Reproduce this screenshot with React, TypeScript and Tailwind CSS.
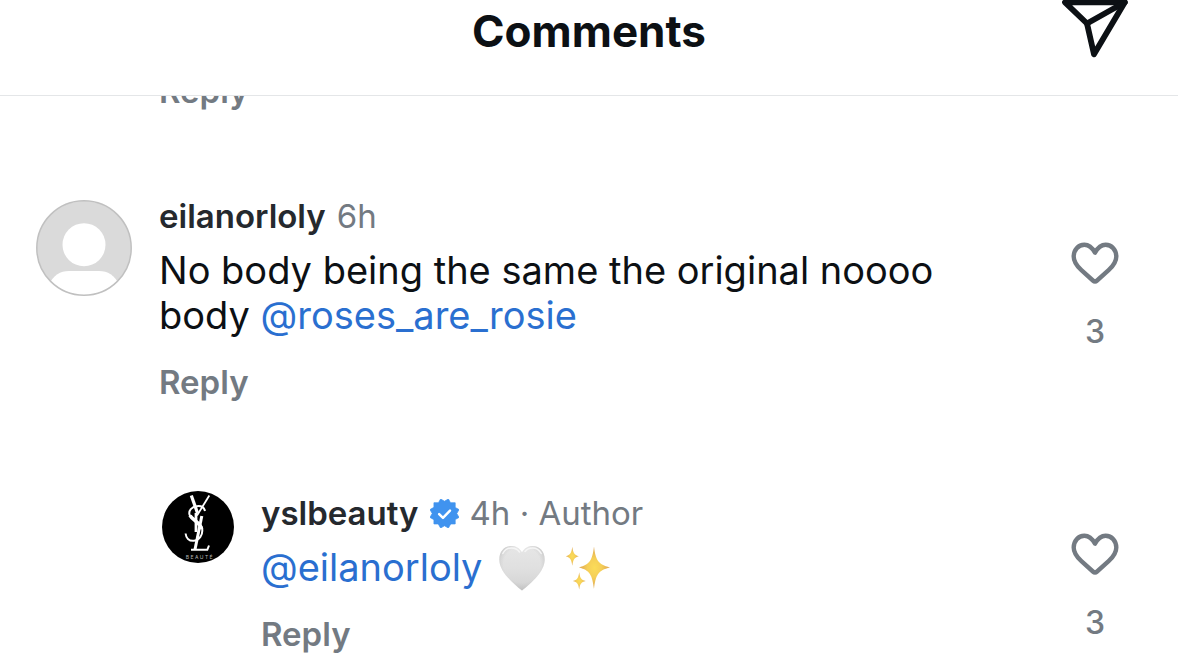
import type { ReactNode } from 'react';

function SendIcon() {
  return (
    <svg viewBox="0 0 68 60" className="block h-[60px] w-[68px]" fill="none" stroke="#0c1014" strokeWidth="5.8" strokeLinejoin="round" strokeLinecap="round" aria-hidden="true">
      <path d="M5 2.3H64.8L34 54.3L27 23.5Z" />
      <path d="M27 23.5L64.8 2.3" />
    </svg>
  );
}

function HeartIcon() {
  return (
    <svg viewBox="0 0 48 42" className="block h-[42px] w-12" fill="none" stroke="#737a82" strokeWidth="4.4" strokeLinejoin="round" aria-hidden="true">
      <path d="M24 10.6C21.2 5.6 17.8 2.7 13.4 2.7C7.2 2.7 2.7 8 2.7 14.6C2.7 20.4 6 24.3 10.4 28.2L21.9 38.5C23.3 39.7 24.7 39.7 26.1 38.5L37.6 28.2C42 24.3 45.3 20.4 45.3 14.6C45.3 8 40.8 2.7 34.6 2.7C30.2 2.7 26.8 5.6 24 10.6Z" />
    </svg>
  );
}

function VerifiedIcon() {
  return (
    <svg viewBox="0 0 40 40" className="block size-[29px] shrink-0" role="img" aria-label="Verified">
      <path
        fill="#4093ef"
        d="M19.998 3.094 14.638 0l-2.972 5.15H5.432v6.354L0 14.64 3.094 20 0 25.359l5.432 3.137v5.905h5.975L14.638 40l5.36-3.094L25.358 40l3.232-5.6h6.162v-6.01L40 25.359 36.905 20 40 14.641l-5.248-3.03v-6.46h-6.419L25.358 0l-5.36 3.094Z"
        stroke="#4093ef"
        strokeLinejoin="round"
      />
      <path d="M12.6 20.8L17.9 26L27.6 16" fill="none" stroke="#fff" strokeWidth="3.4" strokeLinecap="round" strokeLinejoin="round" />
    </svg>
  );
}

const HEART_SHAPE =
  'M24 8.2C21.5 3.9 17.8 2 13.3 2C6.2 2 1.3 7.6 1.3 15.4C1.3 27.5 14 38.2 24 46.5C34 38.2 46.7 27.5 46.7 15.4C46.7 7.6 41.8 2 34.7 2C30.2 2 26.5 3.9 24 8.2Z';

function WhiteHeart() {
  return (
    <svg viewBox="0 0 48 48" className="block size-12 shrink-0" role="img" aria-label="White heart">
      <defs>
        <linearGradient id="heartFill" x1="0" y1="0" x2="0" y2="1">
          <stop offset="0" stopColor="#e6e6e6" />
          <stop offset="0.5" stopColor="#e0e0e0" />
          <stop offset="1" stopColor="#d2d2d2" />
        </linearGradient>
        <radialGradient id="heartEdge" cx="0.5" cy="0.42" r="0.58">
          <stop offset="0.7" stopColor="#bdbdbd" stopOpacity="0" />
          <stop offset="1" stopColor="#b2b2b2" stopOpacity="0.6" />
        </radialGradient>
      </defs>
      <path d={HEART_SHAPE} fill="url(#heartFill)" />
      <path d={HEART_SHAPE} fill="url(#heartEdge)" />
      <path d="M4.8 9.5C7 5.6 9.8 4 13.5 4C17 4 19.5 5.3 21.5 8M27 7.5C29 5.2 31.5 4 34.5 4C38.2 4 41 5.6 43.2 9.5" fill="none" stroke="#f5f5f5" strokeWidth="1.5" strokeLinecap="round" />
    </svg>
  );
}

function Sparkles() {
  return (
    <svg viewBox="0 0 48 48" className="block size-12 shrink-0" role="img" aria-label="Sparkles">
      <defs>
        <radialGradient id="sparkle">
          <stop offset="0" stopColor="#fbdc58" />
          <stop offset="0.45" stopColor="#f5cf58" />
          <stop offset="1" stopColor="#dda452" />
        </radialGradient>
      </defs>
      <g fill="url(#sparkle)">
        <path d="M30 2.5C31.7 16 34 20.6 46 23.4C34 26.2 31.7 31 30 45C28.3 31 26 26.2 15 23.4C26 20.6 28.3 16 30 2.5Z" />
        <path d="M8.3 2.8C9.1 8.8 10.2 11.1 14.8 12.3C10.2 13.5 9.1 15.8 8.3 21.8C7.5 15.8 6.4 13.5 1.8 12.3C6.4 11.1 7.5 8.8 8.3 2.8Z" />
        <path d="M15.2 28.2C16 33.7 17 35.9 21.7 36.9C17 37.9 16 40 15.2 45.6C14.4 40 13.4 37.9 8.9 36.9C13.4 35.9 14.4 33.7 15.2 28.2Z" />
      </g>
    </svg>
  );
}

function DefaultAvatar() {
  return (
    <svg viewBox="0 0 96 96" className="block size-24" role="img" aria-label="eilanorloly's profile picture">
      <defs>
        <clipPath id="avatarClip">
          <circle cx="48" cy="48" r="47" />
        </clipPath>
      </defs>
      <g clipPath="url(#avatarClip)">
        <rect width="96" height="96" fill="#dadada" />
        <circle cx="48" cy="44.7" r="21.5" fill="#fff" />
        <path d="M12 86C18 74.5 24 71 33 71H63C72 71 78 74.5 84 86V96H12Z" fill="#fff" />
      </g>
      <circle cx="48" cy="48" r="47.2" fill="none" stroke="#c0c0c0" strokeWidth="1.5" />
    </svg>
  );
}

function BrandAvatar() {
  return (
    <svg viewBox="0 0 72 72" className="block size-[72px]" role="img" aria-label="yslbeauty's profile picture">
      <circle cx="36" cy="36" r="36" fill="#000" />
      <g fill="none" stroke="#fff">
        <path d="M29.3 4.5L35.5 22" strokeWidth="3.2" />
        <path d="M47.3 4.5L35 24.5" strokeWidth="1.8" />
        <path d="M34 22V41" strokeWidth="2.8" />
        <path d="M43 20C42 16 38.5 14.8 35 15.2C29.5 15.8 26.5 19.5 27.5 23.5C28.8 28.5 38.5 30.5 40 37C41.5 44 37 49.5 31.5 49.8C27 50 24 47 23.6 42.5" strokeWidth="2" />
        <path d="M28 24.5C30.5 29 38 31.5 39.6 38" strokeWidth="3.6" />
        <path d="M39.8 25L33 58.5" strokeWidth="3" />
        <path d="M29 58.8H45.3L47 54.5" strokeWidth="2" />
      </g>
      <text x="37.2" y="67.8" fill="#b5b5b5" fontSize="5" textAnchor="middle" fontFamily="Inter, sans-serif">B E A U T É</text>
    </svg>
  );
}

function ReplyButton() {
  return (
    <button type="button" className="block text-[33px] leading-10 font-semibold text-[#737a82]">
      Reply
    </button>
  );
}

function LikeButton({ count }: { count: number }) {
  return (
    <button type="button" aria-label={`Like, ${count} likes`} className="flex w-[70px] shrink-0 flex-col items-center gap-7 self-start pt-[42px] text-[32px] leading-10 font-medium text-[#737a82]">
      <HeartIcon />
      <span>{count}</span>
    </button>
  );
}

function Mention({ name }: { name: string }) {
  return (
    <a href={`#${name}`} className="text-[#2a6fd0]">
      @{name}
    </a>
  );
}

type CommentProps = {
  avatar: ReactNode;
  name: string;
  meta: string;
  verified?: boolean;
  likes: number;
  nested?: boolean;
  children: ReactNode;
};

function Comment({ avatar, name, meta, verified, likes, nested, children }: CommentProps) {
  return (
    <article className={nested ? 'flex pr-12 pl-[162px]' : 'flex pr-12 pl-9'}>
      <div className={nested ? 'w-[99px] shrink-0' : 'w-[123px] shrink-0'}>{avatar}</div>
      <div className={nested ? 'mt-0.5 min-w-0 flex-1 pr-20' : '-mt-1 min-w-0 flex-1 pr-20'}>
        <header className="flex items-center gap-[11px] text-[33px] leading-10">
          <h2 className="font-semibold text-[#25292e]">{name}</h2>
          {verified && <VerifiedIcon />}
          <span className="text-[#737a82]">{meta}</span>
        </header>
        <div className="mt-3 mb-6 text-[38px] leading-[45px] text-[#0c1014]">{children}</div>
        <ReplyButton />
      </div>
      <LikeButton count={likes} />
    </article>
  );
}

export default function App() {
  return (
    <main className="flex h-screen flex-col overflow-hidden bg-white font-['Inter',sans-serif]">
      <header className="grid h-24 shrink-0 grid-cols-[1fr_auto_1fr] items-start border-b border-[#e4e6e8]">
        <h1 className="col-start-2 pt-[3px] text-[44px] leading-[56px] font-bold text-[#0c1014]">Comments</h1>
        <button type="button" aria-label="Share" className="mr-[50px] justify-self-end">
          <SendIcon />
        </button>
      </header>
      <section aria-label="Comment list" className="min-h-0 flex-1 overflow-hidden">
        <div className="-mt-[25px] mb-[89px] pl-[159px]">
          <ReplyButton />
        </div>
        <div className="flex flex-col gap-[89px]">
          <Comment avatar={<DefaultAvatar />} name="eilanorloly" meta="6h" likes={3}>
            No body being the same the original noooo body <Mention name="roses_are_rosie" />
          </Comment>
          <Comment nested avatar={<BrandAvatar />} name="yslbeauty" meta="4h · Author" verified likes={3}>
            <div className="flex items-center">
              <Mention name="eilanorloly" />
              <span className="-my-1 ml-4 flex gap-[18px]">
                <WhiteHeart />
                <Sparkles />
              </span>
            </div>
          </Comment>
        </div>
      </section>
    </main>
  );
}
